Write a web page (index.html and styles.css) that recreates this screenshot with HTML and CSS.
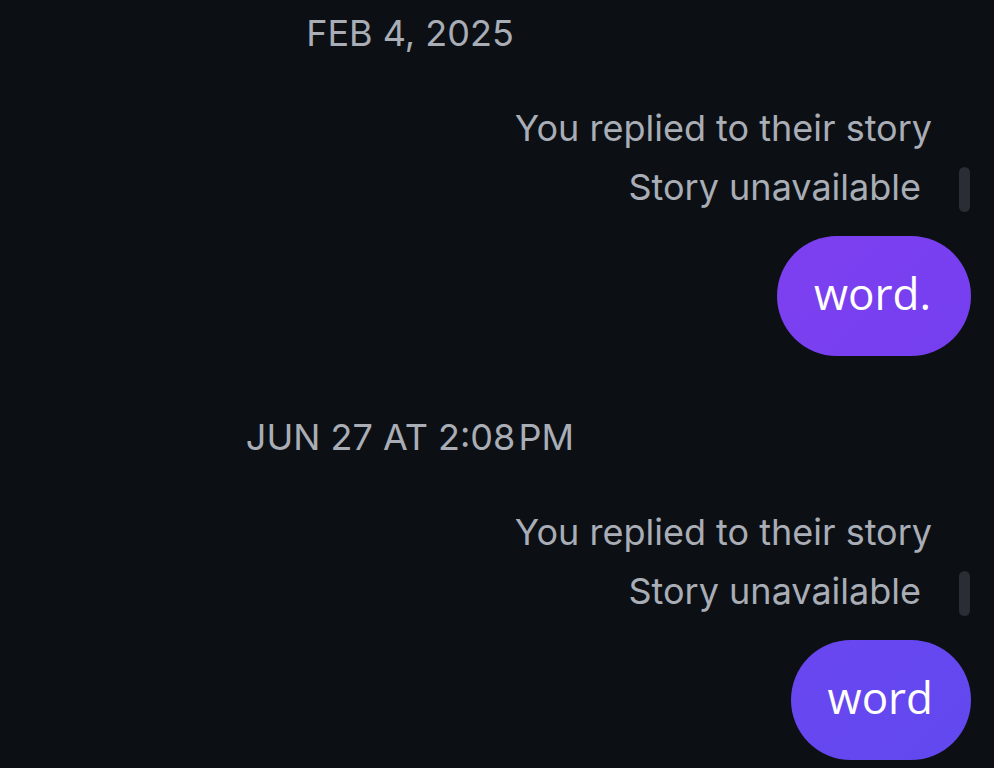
FILE: index.html
```html
<!DOCTYPE html>
<html>
<head>
<meta charset="utf-8">
<link rel="stylesheet" href="styles.css">
</head>
<body>
<div class="thread">
  <div class="date date-first">FEB 4, 2025</div>
  <div class="reply-note">You replied to their story</div>
  <div class="story-row">
    <span class="story-text">Story unavailable</span>
    <span class="story-bar"></span>
  </div>
  <div class="bubble-row">
    <div class="bubble bubble-violet">word.</div>
  </div>

  <div class="date date-second">JUN 27 AT 2:08&#8202;PM</div>
  <div class="reply-note reply-second">You replied to their story</div>
  <div class="story-row">
    <span class="story-text">Story unavailable</span>
    <span class="story-bar"></span>
  </div>
  <div class="bubble-row">
    <div class="bubble bubble-indigo">word</div>
  </div>
</div>
</body>
</html>
```

FILE: styles.css
```css
html, body {
  margin: 0;
  padding: 0;
  background: #0c1015;
  height: 100%;
  overflow: hidden;
}

.thread {
  display: flex;
  flex-direction: column;
  font-family: Inter, "Liberation Sans", sans-serif;
  color: #a9adb6;
  font-size: 36px;
  line-height: 40px;
}

.date {
  width: 820px;
  text-align: center;
}

.date-first {
  margin-top: 13px;
}

.date-second {
  margin-top: 61px;
}

.reply-note {
  align-self: flex-end;
  margin-right: 62px;
  margin-top: 55px;
}

.reply-second {
  margin-top: 55px;
}

.story-row {
  align-self: flex-end;
  display: flex;
  align-items: flex-start;
  gap: 38px;
  margin-right: 24px;
  margin-top: 19px;
}

.story-bar {
  width: 11px;
  height: 45px;
  border-radius: 6px;
  background: #2a2d34;
}

.bubble-row {
  display: flex;
  justify-content: flex-end;
  margin-top: 24px;
  margin-right: 23px;
}

.bubble {
  font-family: "Open Sans", "Noto Sans", sans-serif;
  font-size: 44px;
  line-height: 60px;
  color: #ffffff;
  padding: 27px 40px 33px 37px;
  border-radius: 60px;
}

.bubble-violet {
  background: linear-gradient(135deg, #7e40f0 0%, #743ff0 100%);
}

.bubble-indigo {
  background: linear-gradient(135deg, #6a47f0 0%, #6148ef 100%);
  padding-right: 38px;
}
```
